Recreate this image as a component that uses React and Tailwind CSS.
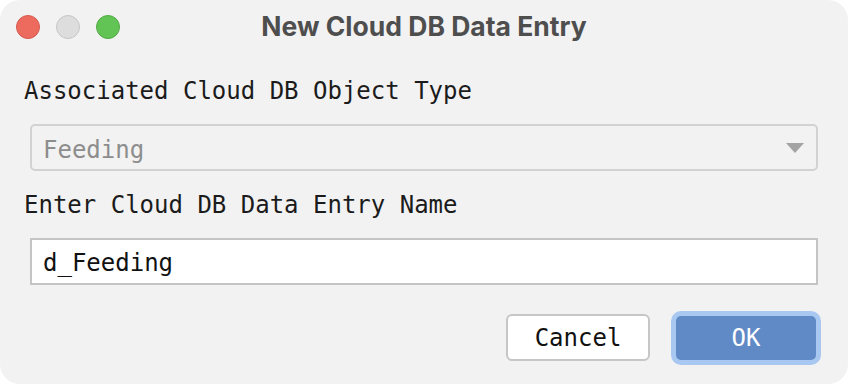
const mono = { fontFamily: '"DejaVu Sans Mono", "Liberation Mono", monospace' };

function TrafficLights() {
  return (
    <div className="flex items-center gap-[16px] pl-[16px]">
      <span className="h-[24px] w-[24px] rounded-full border border-[#d65a4e] bg-[#ed6a5e]" />
      <span className="h-[24px] w-[24px] rounded-full border border-[#c6c6c6] bg-[#dddddd]" />
      <span className="h-[24px] w-[24px] rounded-full border border-[#53a945] bg-[#61c454]" />
    </div>
  );
}

export default function App() {
  return (
    <div className="min-h-screen bg-white">
      <div className="flex h-[384px] w-[848px] flex-col rounded-[20px] bg-[#f2f2f2]">
        <div className="relative flex h-[54px] items-center">
          <TrafficLights />
          <div
            className="absolute inset-0 flex items-center justify-center text-[26.5px] font-bold text-[#4e4e4e]"
            style={{ fontFamily: 'Inter, "Liberation Sans", sans-serif' }}
          >
            New Cloud DB Data Entry
          </div>
        </div>

        <div className="flex flex-col text-[24px]" style={mono}>
          <label className="mt-[22px] pl-[24px] leading-[30px] text-[#1b1b1b]">
            Associated Cloud DB Object Type
          </label>
          <div className="ml-[30px] mr-[30px] mt-[18px] flex h-[47px] items-center justify-between rounded-[5px] border-2 border-[#d2d2d2] bg-[#f2f2f2] pl-[11px] pr-[12px]">
            <span className="mt-[4px] leading-[30px] text-[#8d8d8d]">Feeding</span>
            <svg width="18" height="10" viewBox="0 0 18 10">
              <path d="M0 0 H18 L9 10 Z" fill="#a3a3a3" />
            </svg>
          </div>

          <label className="mt-[19px] pl-[24px] leading-[30px] text-[#1b1b1b]">
            Enter Cloud DB Data Entry Name
          </label>
          <div className="ml-[30px] mr-[30px] mt-[18px] flex h-[47px] items-center border-2 border-[#c4c4c4] bg-white pl-[11px]">
            <span className="mt-[2px] leading-[30px] text-[#111111]">d_Feeding</span>
          </div>

          <div className="mr-[32px] mt-[29px] flex items-center justify-end gap-[26px]">
            <button
              type="button"
              className="h-[47px] w-[144px] rounded-[6px] border-2 border-[#c6c6c6] bg-white leading-[30px] text-[#111111]"
            >
              Cancel
            </button>
            <button
              type="button"
              className="h-[44px] w-[140px] rounded-[5px] bg-[#5f8ac6] leading-[30px] text-white shadow-[0_0_0_5px_#a8c8f1]"
            >
              OK
            </button>
          </div>
        </div>
      </div>
    </div>
  );
}
